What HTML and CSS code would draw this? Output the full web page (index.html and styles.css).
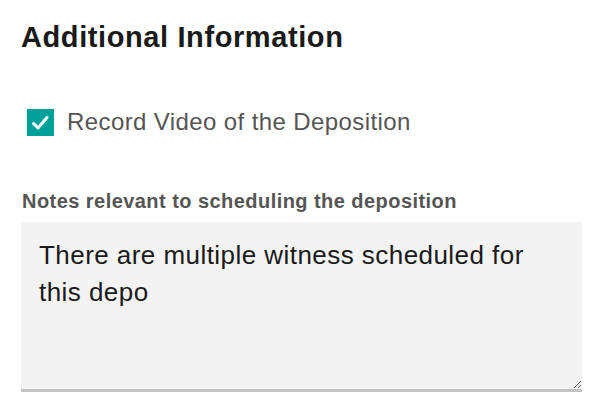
FILE: index.html
```html
<!DOCTYPE html>
<html lang="en">
<head>
    <meta charset="UTF-8">
    <meta name="viewport" content="width=device-width, initial-scale=1.0">
    <title>Additional Information</title>
    <link rel="stylesheet" href="styles.css">
</head>
<body>
    <div class="section">
        <h1 class="title">Additional Information</h1>
        <label class="check-row">
            <span class="checkbox">
                <svg width="27" height="27" viewBox="0 0 27 27">
                    <path d="M6.5 14.5 L11 19 L20 8.5" fill="none" stroke="#fff" stroke-width="3" stroke-linecap="round" stroke-linejoin="round"/>
                </svg>
            </span>
            <span class="check-label">Record Video of the Deposition</span>
        </label>
        <div class="field">
            <label class="field-label" for="notes">Notes relevant to scheduling the deposition</label>
            <textarea id="notes" class="notes">There are multiple witness scheduled for this depo</textarea>
        </div>
    </div>
</body>
</html>
```

FILE: styles.css
```css
body {
    font-family: "Liberation Sans", Arial, sans-serif;
    background-color: #ffffff;
    margin: 0;
    padding: 0;
}

.section {
    padding: 20px 26px 0 21px;
}

.title {
    margin: 0;
    font-size: 29px;
    font-weight: bold;
    letter-spacing: 0.6px;
    color: #1a1a1a;
    line-height: 34px;
}

.check-row {
    display: flex;
    align-items: center;
    gap: 13px;
    margin: 54px 0 0 6px;
}

.checkbox {
    width: 27px;
    height: 27px;
    flex-shrink: 0;
    background-color: #00a19a;
}

.checkbox svg {
    display: block;
}

.check-label {
    font-size: 24px;
    letter-spacing: 0.4px;
    color: #555555;
}

.field {
    margin-top: 54px;
}

.field-label {
    display: block;
    margin-left: 1px;
    font-size: 20px;
    font-weight: bold;
    letter-spacing: 0.45px;
    color: #555555;
}

.notes {
    display: block;
    box-sizing: border-box;
    width: 561px;
    height: 170px;
    margin-top: 9px;
    padding: 15px 20px 0 18px;
    border: none;
    border-bottom: 3px solid #c4c4c4;
    background-color: #f3f3f3;
    font-family: "Liberation Sans", Arial, sans-serif;
    font-size: 26px;
    letter-spacing: 0.45px;
    line-height: 37px;
    color: #1a1a1a;
    resize: vertical;
    outline: none;
}
```
